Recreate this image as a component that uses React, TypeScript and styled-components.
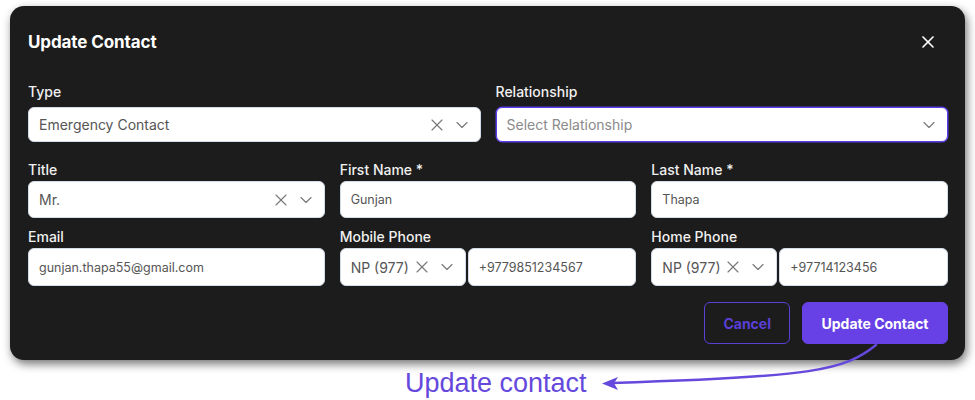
import React from 'react'
import styled, { createGlobalStyle } from 'styled-components'
import { X, ChevronDown } from 'lucide-react'

const GlobalStyle = createGlobalStyle`
  html, body {
    margin: 0;
    padding: 0;
    background: #fff;
  }
  body {
    font-family: Inter, "Noto Sans", sans-serif;
  }
`

const Page = styled.div`
  position: relative;
  width: 975px;
  height: 400px;
  padding: 6px 0 0 10px;
  box-sizing: border-box;
`

const Modal = styled.div`
  width: 955px;
  box-sizing: border-box;
  background: #1c1c1c;
  border-radius: 14px;
  padding: 24px 17px 16px 18px;
  box-shadow: 2px 4px 10px rgba(0, 0, 0, 0.55);
  color: #fff;
`

const Header = styled.div`
  display: flex;
  align-items: center;
  justify-content: space-between;
  height: 24px;
`

const Title = styled.h2`
  margin: 0;
  font-size: 17px;
  font-weight: 700;
  line-height: 24px;
  letter-spacing: -0.1px;
`

const CloseButton = styled.button`
  display: flex;
  align-items: center;
  justify-content: center;
  width: 20px;
  height: 20px;
  padding: 0;
  margin-right: 10px;
  border: none;
  background: none;
  color: #fff;
  cursor: pointer;
`

const Row = styled.div<{ $cols: number; $top: number }>`
  display: grid;
  grid-template-columns: repeat(${(p) => p.$cols}, 1fr);
  column-gap: 15px;
  margin-top: ${(p) => p.$top}px;
`

const Field = styled.div`
  display: flex;
  flex-direction: column;
  min-width: 0;
`

const Label = styled.label<{ $gap: number }>`
  font-size: 14px;
  font-weight: 500;
  line-height: 16px;
  color: #f0f0f0;
  margin-bottom: ${(p) => p.$gap}px;
`

const Box = styled.div<{ $h: number; $focused?: boolean }>`
  display: flex;
  align-items: center;
  flex: 1 1 auto;
  min-width: 0;
  height: ${(p) => p.$h}px;
  box-sizing: border-box;
  background: #fff;
  border: 1px solid ${(p) => (p.$focused ? '#5b3be6' : '#d3dce8')};
  box-shadow: ${(p) => (p.$focused ? '0 0 0 0.5px #5b3be6' : 'none')};
  border-radius: 6px;
  padding: 0 8px 0 10px;
`

const Value = styled.span<{ $size: number; $placeholder?: boolean }>`
  flex: 1;
  font-size: ${(p) => p.$size}px;
  color: ${(p) => (p.$placeholder ? '#8a8a8a' : '#555')};
  white-space: nowrap;
  overflow: hidden;
`

const Icons = styled.div`
  display: flex;
  align-items: center;
  gap: 5px;
  color: #7a7a7a;
`

const PhoneGroup = styled.div`
  display: flex;
  gap: 2px;
`

const CountryBox = styled(Box)`
  flex: 0 0 126px;
`

const Actions = styled.div`
  display: flex;
  justify-content: flex-end;
  gap: 12px;
  margin-top: 16px;
`

const Button = styled.button<{ $primary?: boolean }>`
  height: 42px;
  padding: 0 18px;
  border-radius: 6px;
  font-family: Inter, sans-serif;
  font-size: 14px;
  font-weight: 700;
  cursor: pointer;
  border: 1.5px solid ${(p) => (p.$primary ? '#6741e6' : '#5b3fd6')};
  background: ${(p) => (p.$primary ? '#6741e6' : 'transparent')};
  color: ${(p) => (p.$primary ? '#fff' : '#5b3fd6')};
  min-width: ${(p) => (p.$primary ? 146 : 84)}px;
`

const Annotation = styled.div`
  margin-top: 8px;
  padding-left: 395px;
  font-family: "Liberation Sans", Arial, sans-serif;
  font-size: 27px;
  line-height: 30px;
  color: #6548dc;
`

const ArrowLayer = styled.svg`
  position: absolute;
  left: 0;
  top: 0;
  pointer-events: none;
`

interface SelectProps {
  value?: string
  placeholder?: string
  clearable?: boolean
  focused?: boolean
  height: number
  size?: number
}

const Select = ({ value, placeholder, clearable, focused, height, size = 14 }: SelectProps) => (
  <Box $h={height} $focused={focused}>
    <Value $size={size} $placeholder={!value}>
      {value || placeholder}
    </Value>
    <Icons>
      {clearable && <X size={20} strokeWidth={1.4} />}
      <ChevronDown size={20} strokeWidth={1.4} />
    </Icons>
  </Box>
)

const Input = ({ value, height }: { value: string; height: number }) => (
  <Box $h={height}>
    <Value $size={12.5}>{value}</Value>
  </Box>
)

const Phone = ({ number }: { number: string }) => (
  <PhoneGroup>
    <CountryBox $h={38}>
      <Value $size={14}>NP (977)</Value>
      <Icons>
        <X size={20} strokeWidth={1.4} />
        <ChevronDown size={20} strokeWidth={1.4} />
      </Icons>
    </CountryBox>
    <Input value={number} height={38} />
  </PhoneGroup>
)

export default function App() {
  return (
    <Page>
      <GlobalStyle />
      <Modal>
        <Header>
          <Title>Update Contact</Title>
          <CloseButton aria-label="Close">
            <X size={20} strokeWidth={2} />
          </CloseButton>
        </Header>

        <Row $cols={2} $top={30}>
          <Field>
            <Label $gap={7}>Type</Label>
            <Select value="Emergency Contact" clearable height={35} />
          </Field>
          <Field>
            <Label $gap={7}>Relationship</Label>
            <Select placeholder="Select Relationship" focused height={35} />
          </Field>
        </Row>

        <Row $cols={3} $top={20}>
          <Field>
            <Label $gap={3}>Title</Label>
            <Select value="Mr." clearable height={37} />
          </Field>
          <Field>
            <Label $gap={3}>First Name *</Label>
            <Input value="Gunjan" height={37} />
          </Field>
          <Field>
            <Label $gap={3}>Last Name *</Label>
            <Input value="Thapa" height={37} />
          </Field>
        </Row>

        <Row $cols={3} $top={11}>
          <Field>
            <Label $gap={3}>Email</Label>
            <Input value="gunjan.thapa55@gmail.com" height={38} />
          </Field>
          <Field>
            <Label $gap={3}>Mobile Phone</Label>
            <Phone number="+9779851234567" />
          </Field>
          <Field>
            <Label $gap={3}>Home Phone</Label>
            <Phone number="+97714123456" />
          </Field>
        </Row>

        <Actions>
          <Button>Cancel</Button>
          <Button $primary>Update Contact</Button>
        </Actions>
      </Modal>

      <Annotation>Update contact</Annotation>

      <ArrowLayer width="975" height="400" viewBox="0 0 975 400">
        <path
          d="M 876 345 C 845 370, 815 377, 612 383"
          fill="none"
          stroke="#6548dc"
          strokeWidth="2.5"
          strokeLinecap="round"
        />
        <path d="M 602 383.5 L 618 377 L 614 383.3 L 618 390 Z" fill="#6548dc" />
      </ArrowLayer>
    </Page>
  )
}
